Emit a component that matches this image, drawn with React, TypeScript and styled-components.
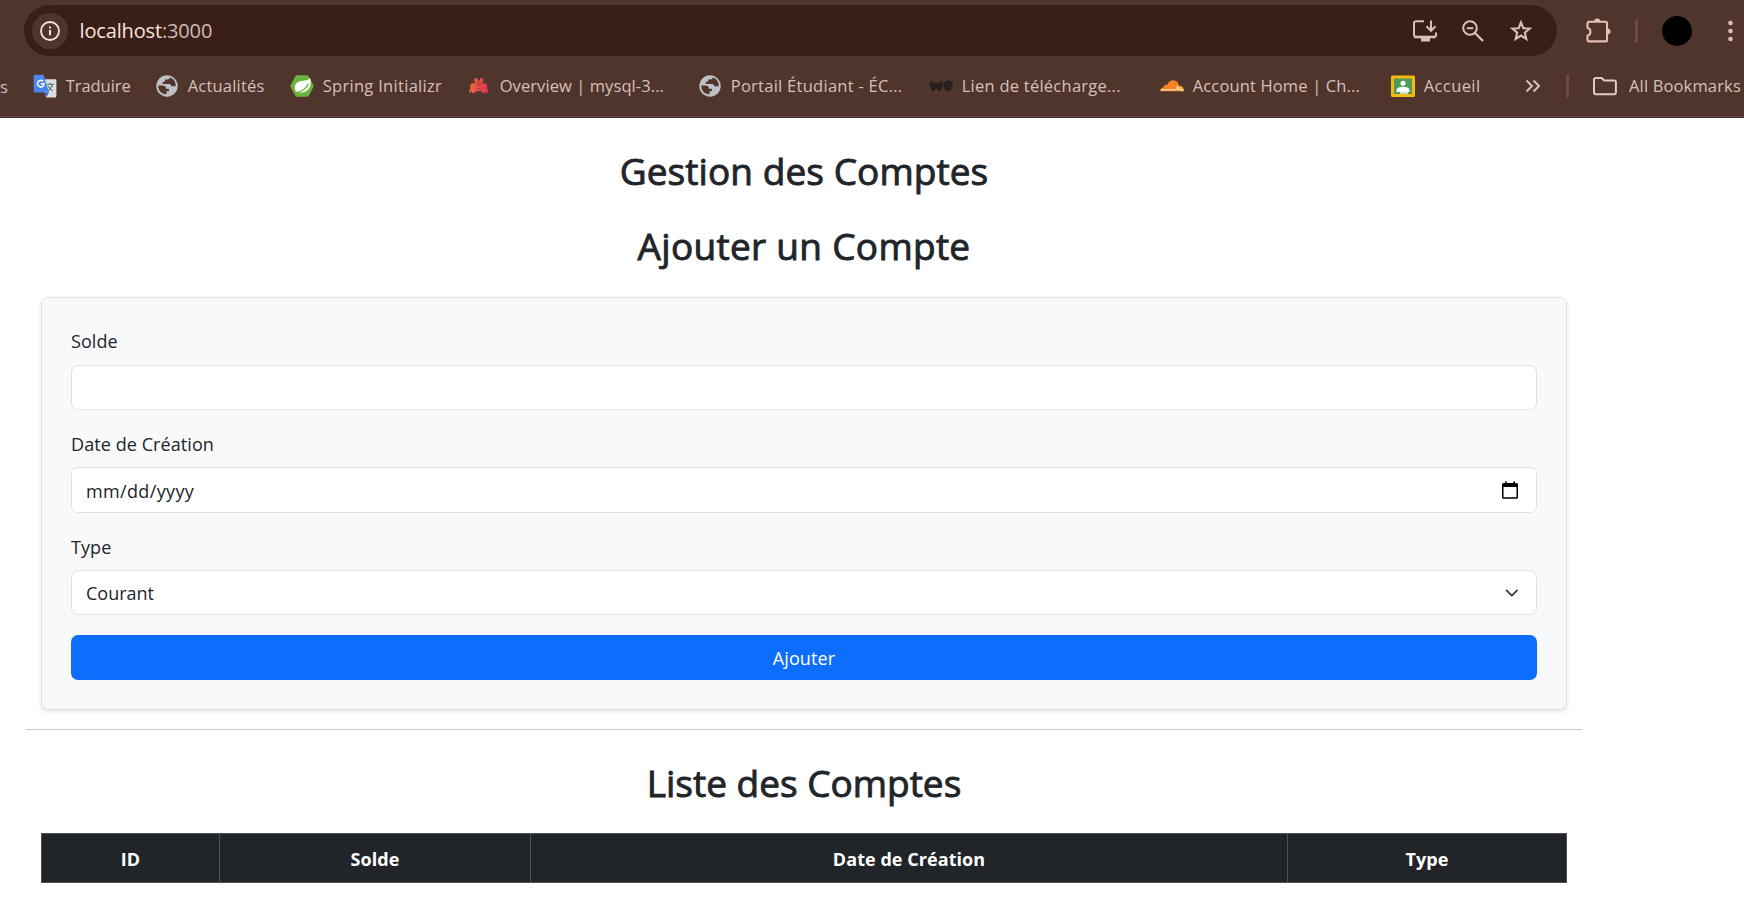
import React from "react";
import styled, { createGlobalStyle } from "styled-components";

const GlobalStyle = createGlobalStyle`
  *, *::before, *::after { box-sizing: border-box; }
  body {
    margin: 0;
    background: #fff;
    color: #212529;
    font-family: "Open Sans", "Noto Sans", sans-serif;
    overflow: hidden;
  }
`;

const Page = styled.div`
  width: 1744px;
  height: 922px;
  overflow: hidden;
  background: #fff;
`;

/* ---------- browser chrome ---------- */

const Chrome = styled.header`
  height: 118px;
  padding-top: 5px;
  background: #50352d;
  border-bottom: 1px solid #4d302b;
  box-shadow: inset 0 -1px #5d4946;
  overflow: hidden;
  white-space: nowrap;
`;

const Toolbar = styled.div`
  display: flex;
  align-items: center;
  height: 51px;
  padding-left: 24px;
`;

const AddressBar = styled.div`
  display: flex;
  align-items: center;
  width: 1533px;
  height: 51px;
  padding: 0 24px 0 8px;
  border-radius: 26px;
  background: #3a1f19;
`;

const SiteInfo = styled.span`
  display: grid;
  place-items: center;
  width: 36px;
  height: 36px;
  border-radius: 50%;
  background: #50352d;
`;

const Url = styled.span`
  flex: 1;
  margin-left: 11.5px;
  font-size: 20px;
  line-height: 28px;
  letter-spacing: -0.15px;
  color: #fbe3dd;
`;

const Port = styled.span`
  color: #d2bab3;
`;

const AddressActions = styled.div`
  display: flex;
  gap: 24px;
`;

const ToolbarActions = styled.div`
  display: flex;
  align-items: center;
  margin-left: 28px;
`;

const Divider = styled.span<{ $before: number; $after: number }>`
  flex: none;
  width: 3px;
  height: 24px;
  margin: 0 ${(p) => p.$after}px 0 ${(p) => p.$before}px;
  border-radius: 2px;
  background: #6b4a41;
`;

const Avatar = styled.span`
  width: 30px;
  height: 30px;
  margin-right: 36px;
  border-radius: 50%;
  background: #000;
`;

const BookmarksBar = styled.nav`
  display: flex;
  align-items: center;
  height: 60px;

  svg { flex: none; }
`;

const ClippedLabel = styled.span`
  flex: none;
  width: 33px;
  font-size: 16.5px;
  color: #d6c0b9;
`;

const Bookmark = styled.span<{ $width: number; $tracking: number; $gap?: number }>`
  display: flex;
  flex: none;
  align-items: center;
  gap: ${(p) => p.$gap ?? 8.7}px;
  width: ${(p) => p.$width}px;
  font-size: 16.5px;
  line-height: 24px;
  letter-spacing: ${(p) => p.$tracking}px;
  color: #d6c0b9;
`;

/* ---------- page content ---------- */

const Main = styled.main`
  width: 1556px;
  margin-left: 26px;
  padding-top: 31px;
`;

const Section = styled.section`
  padding: 0 15px;
`;

const Title = styled.h2<{ $gap: number; $tracking?: number }>`
  margin: 0 0 ${(p) => p.$gap}px;
  font-size: 37px;
  font-weight: 500;
  line-height: 44px;
  letter-spacing: ${(p) => p.$tracking ?? 0}px;
  text-align: center;
  -webkit-text-stroke: 0.9px #212529;
`;

const Form = styled.form`
  height: 413px;
  padding: 29.3px 29px 0;
  border: 1px solid #dee2e6;
  border-radius: 7px;
  background: #f8f9fb;
  box-shadow: 0 2px 5px rgba(0, 0, 0, 0.09);
`;

const Field = styled.div`
  margin-bottom: 20px;
`;

const Label = styled.label`
  display: block;
  height: 28px;
  margin-bottom: 9.3px;
  font-size: 18px;
  line-height: 28px;
  letter-spacing: 0.08px;
`;

const Control = styled.div<{ $tracking: number; $inset: number }>`
  display: flex;
  align-items: center;
  justify-content: space-between;
  height: 45.33px;
  padding: ${(p) => p.$inset}px 18px 0 14px;
  border: 1px solid #dee2e6;
  border-radius: 7px;
  background: #fff;
  font-size: 18px;
  letter-spacing: ${(p) => p.$tracking}px;
`;

const TextInput = styled.input`
  display: block;
  width: 100%;
  height: 45.33px;
  padding: 0 14px;
  border: 1px solid #dee2e6;
  border-radius: 7px;
  background: #fff;
  outline: none;
`;

const SubmitButton = styled.button`
  display: block;
  width: 100%;
  height: 44.8px;
  padding: 0;
  border: 0;
  border-radius: 7px;
  background: #0d6efd;
  color: #fff;
  font: 400 18px "Open Sans", sans-serif;
  letter-spacing: 0.1px;
`;

const Separator = styled.hr`
  height: 1px;
  margin: 19px 0 31px;
  border: 0;
  background: #c7c8c9;
`;

const Table = styled.table`
  width: 1526px;
  height: 50px;
  table-layout: fixed;
  border-collapse: separate;
  border-spacing: 0;
  border: 1px solid #4d5154;
  background: #212529;
  color: #fff;
`;

const HeadCell = styled.th<{ $width: number }>`
  width: ${(p) => p.$width}px;
  padding: 2px 0 0;
  font-size: 18px;
  font-weight: 700;
  line-height: 27px;
  letter-spacing: 0.05px;
  text-align: center;

  & + & { border-left: 1px solid #4d5154; }
`;

/* ---------- icons ---------- */

const InfoIcon = () => (
  <svg width="20" height="20" viewBox="0 0 20 20" fill="none" stroke="#fbe3dd">
    <circle cx="10" cy="10" r="9" strokeWidth="1.8" />
    <path d="M10 9v5.2M10 5.6v2" strokeWidth="2" />
  </svg>
);

const InstallIcon = () => (
  <svg width="24" height="24" viewBox="0 0 24 24" fill="none" stroke="#d6c0b9" strokeWidth="2">
    <path d="M11 2.200H3a2 2 0 0 0-2 2V16a2 2 0 0 0 2 2h18a2 2 0 0 0 2-2v-2.500" />
    <path d="M1.500 18h21" strokeWidth="2.600" />
    <path d="M8 18h9v4.500H8z" fill="#d6c0b9" stroke="none" />
    <path d="M18 1.500v10M13.500 7.300l4.500 4.500 4.500-4.500" />
  </svg>
);

const ZoomOutIcon = () => (
  <svg width="24" height="24" viewBox="0 0 24 24" fill="none" stroke="#d6c0b9">
    <circle cx="9" cy="9" r="6.800" strokeWidth="2" />
    <path d="M5.800 9.200h6.400" strokeWidth="2" />
    <path d="M14 14l8 8" strokeWidth="2.300" />
  </svg>
);

const StarIcon = () => (
  <svg width="24" height="24" viewBox="0 0 24 24" fill="none" stroke="#d6c0b9" strokeWidth="2.100">
    <path d="M12 3.400l2.350 5.800 6.300.5-4.850 4.050 1.550 6.150L12 16.600l-5.350 3.300L8.200 13.750 3.350 9.700l6.300-.5z" />
  </svg>
);

const PuzzleIcon = () => (
  <svg width="27" height="26" viewBox="-0.500 0.500 27 26">
    <path
      d="M3.400 4.200H20a1.500 1.500 0 0 1 1.500 1.500V22.400a1.500 1.500 0 0 1-1.500 1.500H3.400A1.500 1.500 0 0 1 2 22.400v-4.200a4.200 4.200 0 0 0 0-8V5.700a1.500 1.500 0 0 1 1.400-1.500z"
      fill="none"
      stroke="#e8bdb1"
      strokeWidth="2.100"
    />
    <path d="M8.800 4a3 3 0 0 1 6 0zM22 11a3 3 0 0 1 0 6z" fill="#e8bdb1" />
  </svg>
);

const MenuDots = () => (
  <svg width="5" height="22" viewBox="0 0 5 22" fill="#e8bdb1">
    <circle cx="2.500" cy="3" r="2.300" />
    <circle cx="2.500" cy="11" r="2.300" />
    <circle cx="2.500" cy="19" r="2.300" />
  </svg>
);

const TranslateIcon = () => (
  <svg width="24" height="24" viewBox="0 0 24 24">
    <path d="M9 5.200h13a1.400 1.400 0 0 1 1.400 1.400V22a1.400 1.400 0 0 1-1.400 1.400h-9z" fill="#dedfe0" />
    <path d="M12 18.500h4l-3 4.900z" fill="#3a5fc0" />
    <path d="M13.500 10.400h7.600M17 8.800v1.600M19.500 10.400c-.6 2.800-2.400 5-4.600 6.500M15 12c1 2 2.800 4 5 5" stroke="#6c7f88" strokeWidth="1.200" fill="none" />
    <path d="M2 .8h8.500l5.600 17.700H2A1.400 1.400 0 0 1 .7 17.100V2.200A1.400 1.400 0 0 1 2 .8z" fill="#4a86ee" />
    <path d="M10.200 7.400a3.300 3.300 0 1 0 .9 2.400H7.800" stroke="#fff" strokeWidth="1.500" fill="none" />
  </svg>
);

const GlobeIcon = () => (
  <svg width="24" height="24" viewBox="0 0 24 24">
    <circle cx="12" cy="12" r="10.700" fill="#bdc1c6" />
    <path
      d="M3.200 11.600h4.200c2.400 0 3.500 1.200 3.500 3.200h3v2.500h-2.400v2.900c-4.800.2-8.300-3.500-8.300-8.600zM14.700 3.600c-.2 1.300-.8 1.800-2.200 1.800H10v2.300H7.800V10H14c1.500 0 2.300.7 2.300 2.200h4.300c.5-4-2-7.600-5.900-8.600z"
      fill="#50352d"
    />
  </svg>
);

const SpringIcon = () => (
  <svg width="24" height="24" viewBox="0 0 24 24">
    <path d="M7 1.300h10a2 2 0 0 1 1.700 1L23.400 11a2 2 0 0 1 0 2l-4.700 8.700a2 2 0 0 1-1.700 1H7a2 2 0 0 1-1.700-1L.6 13a2 2 0 0 1 0-2l4.700-8.700a2 2 0 0 1 1.700-1z" fill="#6db33f" />
    <path d="M20 3.800c1.500 5.800.7 10.900-3.900 13.400-3.400 1.900-7.400 1.500-10.200.4C4 13.600 4.600 9.400 8.800 7.800 12.800 6.300 17.600 7.400 20 3.800z" fill="#fff" />
    <path d="M5.500 18.600C11.500 18 15.900 15 18.300 10" stroke="#6db33f" strokeWidth="1.300" fill="none" />
  </svg>
);

const CrabIcon = () => (
  <svg width="24" height="24" viewBox="0 0 24 24">
    <defs>
      <linearGradient id="crab" gradientUnits="userSpaceOnUse" x1="2" y1="0" x2="21" y2="0">
        <stop offset="0" stopColor="#ec6a3c" />
        <stop offset="1" stopColor="#df3352" />
      </linearGradient>
    </defs>
    <ellipse cx="11.800" cy="12.600" rx="5.800" ry="4.700" fill="url(#crab)" />
    <circle cx="9" cy="6" r="1.900" fill="url(#crab)" />
    <circle cx="14.600" cy="6" r="1.900" fill="url(#crab)" />
    <path
      d="M8.500 6.500h6.500l1 4H7.500zM6.800 9C4.300 8.600 3 10.500 3.200 14L6.500 13zM16.800 9c2.500-.4 3.800 1.500 3.600 5L17 13zM6.500 12.500C3 13.500 2 16 2.800 19.500l2-2.600.6 3 2-2 .8 1.600 1.500-4zM17.100 12.500c3.500 1 4.500 3.500 3.700 7l-2-2.600-.6 3-2-2-.8 1.600-1.500-4z"
      fill="url(#crab)"
    />
    <circle cx="11.800" cy="10" r="1.600" fill="none" stroke="#8c3a34" strokeWidth="0.900" />
    <path d="M8.500 13.800c2 1.700 4.700 1.700 6.700 0" stroke="#a33c37" strokeWidth="0.900" fill="none" />
  </svg>
);

const WeIcon = () => (
  <svg width="24" height="24" viewBox="0 0 24 24" fill="none" stroke="#241f1e" strokeLinejoin="round">
    <path d="M2.200 7.400l2 7.600 3-4.500 3 4.500 2-7.600" strokeWidth="4" />
    <path d="M16 11.700h6.400c0-2.300-1.300-3.600-3.200-3.600s-3.400 1.500-3.400 3.500 1.400 3.600 3.400 3.600c1.200 0 2-.3 2.800-.9" strokeWidth="3" />
  </svg>
);

const CloudIcon = () => (
  <svg width="24" height="24" viewBox="0 0 24 24">
    <path d="M0 17.300c0-2.300 1.500-3.900 3.700-4.100-.1-1.800 1.700-3 3.400-2.200C8.200 8 10.600 6.100 13.400 6.200c3 .1 5.200 2.200 5.700 5.300l-1.900 5.800z" fill="#f6821f" />
    <path d="M17 17.300l1.600-5.400c3-.5 5.400 2 5.400 5.400z" fill="#fbad41" />
    <path d="M1 15.900h14.800l1.800-3.400.8 3 4.300.4" stroke="#ffe1bd" strokeWidth="1.100" fill="none" />
  </svg>
);

const ClassroomIcon = () => (
  <svg width="24" height="24" viewBox="0 0 24 24">
    <rect y="1.500" width="24" height="21.500" rx="1.500" fill="#f6b90f" />
    <rect x="3" y="4.500" width="18" height="15.500" fill="#4b9c55" />
    <circle cx="12" cy="9.300" r="2.500" fill="#fff" />
    <path d="M5.500 18v-2c0-2 3.500-3.200 6.500-3.200s6.500 1.200 6.500 3.200v2z" fill="#fff" />
    <path d="M9 18h8v2H9z" fill="#fff" opacity="0.700" />
  </svg>
);

const ChevronsIcon = () => (
  <svg width="16" height="14" viewBox="0 0 16 14" fill="none" stroke="#d6c0b9" strokeWidth="2">
    <path d="M1.500 1.500L7 7l-5.500 5.500M8.500 1.500L14 7l-5.500 5.500" />
  </svg>
);

const FolderIcon = () => (
  <svg width="24" height="20" viewBox="0 0 24 20" fill="none" stroke="#dfcbc5" strokeWidth="2">
    <path d="M2.700 2h6l2.500 2.500h10a1.700 1.700 0 0 1 1.700 1.700v10.300a1.700 1.700 0 0 1-1.700 1.700H2.700A1.700 1.700 0 0 1 1 16.500V3.700A1.700 1.700 0 0 1 2.700 2z" />
  </svg>
);

const CalendarIcon = () => (
  <svg width="16" height="20" viewBox="0 0 16 20" fill="#000">
    <path d="M14.500 2H13V.5h-1.800V2H4.800V.5H3V2H1.500A1.500 1.500 0 0 0 0 3.500v12.700a1.500 1.500 0 0 0 1.500 1.500h13a1.500 1.500 0 0 0 1.500-1.500V3.500A1.500 1.500 0 0 0 14.500 2zm0 14.200h-13V6h13z" />
  </svg>
);

const SelectArrow = () => (
  <svg width="15" height="14" viewBox="-1 0 17 16" fill="none" stroke="#343a40" strokeWidth="2" strokeLinecap="round" strokeLinejoin="round">
    <path d="m3 5 6 6 6-6" />
  </svg>
);

const bookmarks = [
  { icon: <TranslateIcon />, label: "Traduire", width: 122, tracking: -0.05 },
  { icon: <GlobeIcon />, label: "Actualités", width: 135, tracking: 0.2 },
  { icon: <SpringIcon />, label: "Spring Initializr", width: 177, tracking: 0.3 },
  { icon: <CrabIcon />, label: "Overview | mysql-3...", width: 231, tracking: 0.08 },
  { icon: <GlobeIcon />, label: "Portail Étudiant - ÉC...", width: 231, tracking: 0.27 },
  { icon: <WeIcon />, label: "Lien de télécharge...", width: 231, tracking: 0.25 },
  { icon: <CloudIcon />, label: "Account Home | Ch...", width: 231, tracking: 0.15 },
  { icon: <ClassroomIcon />, label: "Accueil", width: 134, tracking: 0.4 },
];

const columns = [
  { label: "ID", width: 177 },
  { label: "Solde", width: 311 },
  { label: "Date de Création", width: 757 },
  { label: "Type", width: 279 },
];

export default function App() {
  return (
    <Page>
      <GlobalStyle />
      <Chrome>
        <Toolbar>
          <AddressBar>
            <SiteInfo>
              <InfoIcon />
            </SiteInfo>
            <Url>
              localhost<Port>:3000</Port>
            </Url>
            <AddressActions>
              <InstallIcon />
              <ZoomOutIcon />
              <StarIcon />
            </AddressActions>
          </AddressBar>
          <ToolbarActions>
            <PuzzleIcon />
            <Divider $before={23} $after={24} />
            <Avatar />
            <MenuDots />
          </ToolbarActions>
        </Toolbar>
        <BookmarksBar>
          <ClippedLabel>s</ClippedLabel>
          {bookmarks.map((b) => (
            <Bookmark key={b.label} $width={b.width} $tracking={b.tracking}>
              {b.icon}
              {b.label}
            </Bookmark>
          ))}
          <ChevronsIcon />
          <Divider $before={25} $after={24} />
          <Bookmark $width={170} $tracking={0.15} $gap={12}>
            <FolderIcon />
            All Bookmarks
          </Bookmark>
        </BookmarksBar>
      </Chrome>
      <Main>
        <Section>
          <Title $gap={31} $tracking={0.08}>Gestion des Comptes</Title>
          <Title $gap={29} $tracking={0.3}>Ajouter un Compte</Title>
          <Form onSubmit={(e) => e.preventDefault()}>
            <Field>
              <Label htmlFor="solde">Solde</Label>
              <TextInput id="solde" />
            </Field>
            <Field>
              <Label>Date de Création</Label>
              <Control $tracking={0.35} $inset={2}>
                mm/dd/yyyy
                <CalendarIcon />
              </Control>
            </Field>
            <Field>
              <Label>Type</Label>
              <Control $tracking={0} $inset={1}>
                Courant
                <SelectArrow />
              </Control>
            </Field>
            <SubmitButton>Ajouter</SubmitButton>
          </Form>
        </Section>
        <Separator />
        <Section>
          <Title $gap={28}>Liste des Comptes</Title>
          <Table>
            <thead>
              <tr>
                {columns.map((c) => (
                  <HeadCell key={c.label} $width={c.width}>
                    {c.label}
                  </HeadCell>
                ))}
              </tr>
            </thead>
          </Table>
        </Section>
      </Main>
    </Page>
  );
}
